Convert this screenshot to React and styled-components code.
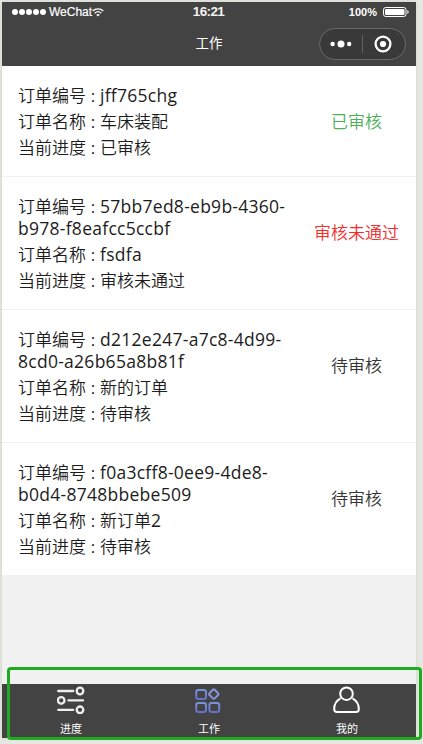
import styled, { createGlobalStyle } from "styled-components";

const orders = [
	{ id: "jff765chg", name: "车床装配", status: "已审核", color: "#4caf58" },
	{
		id: "57bb7ed8-eb9b-4360-b978-f8eafcc5ccbf",
		latinName: "fsdfa",
		status: "审核未通过",
		color: "#f52a2a",
	},
	{
		id: "d212e247-a7c8-4d99-8cd0-a26b65a8b81f",
		name: "新的订单",
		status: "待审核",
		color: "#333",
	},
	{
		id: "f0a3cff8-0ee9-4de8-b0d4-8748bbebe509",
		name: "新订单",
		latinName: "2",
		status: "待审核",
		color: "#333",
	},
];

const WifiIcon = () => (
	<svg width="12" height="9" viewBox="0 0 12 9" fill="none" stroke="#fff">
		<path d="M0.7 3.1C3.7 0.1 8.3 0.1 11.3 3.1" strokeWidth="1.4" />
		<path d="M2.7 5.2C4.6 3.4 7.4 3.4 9.3 5.2" strokeWidth="1.3" />
		<path d="M4.2 6.7Q6 5.4 7.8 6.7L6 8.6Z" fill="#fff" stroke="none" />
	</svg>
);

const BatteryIcon = () => (
	<svg width="27" height="10" viewBox="0 0 27 10">
		<rect x="0.5" y="0.5" width="22.5" height="9" rx="2.2" fill="none" stroke="#fff" />
		<rect x="2" y="2" width="19.5" height="6" rx="1" fill="#fff" />
		<path d="M24.4 3Q27 5 24.4 7Z" fill="#fff" />
	</svg>
);

const ProgressIcon = () => (
	<svg width="28" height="28" viewBox="0 0 28 28" fill="none" stroke="#eee" strokeWidth="2.3" strokeLinecap="round">
		<path d="M1.2 5H16.2M11.5 14.4H26M1.2 23.8H16.2" />
		<circle cx="23" cy="5" r="3.3" />
		<circle cx="4.2" cy="14.4" r="3.3" />
		<circle cx="23" cy="23.8" r="3.3" />
	</svg>
);

const WorkIcon = () => (
	<svg width="28" height="28" viewBox="0 0 28 28" fill="none" stroke="url(#work)" strokeWidth="2">
		<defs>
			<linearGradient id="work" x1="0" y1="0" x2="0" y2="1">
				<stop offset="0" stopColor="#7892dc" />
				<stop offset="1" stopColor="#6870c8" />
			</linearGradient>
		</defs>
		<rect x="1.2" y="4" width="9.8" height="9" rx="2.2" />
		<rect x="1.2" y="17" width="9.8" height="9" rx="2.2" />
		<rect x="14.4" y="17" width="9.8" height="9" rx="2.2" />
		<rect
			x="15.1"
			y="4.4"
			width="7.4"
			height="7.4"
			rx="1.3"
			transform="rotate(45 18.8 8.1)"
			stroke="#8796d8"
		/>
	</svg>
);

const MineIcon = () => (
	<svg width="28" height="28" viewBox="0 0 28 28" fill="none" stroke="#fff" strokeWidth="2" strokeLinecap="round">
		<circle cx="13.5" cy="7.7" r="6.3" />
		<path d="M6.8 12.9C3 15 1.2 18.6 1.2 23.2Q1.2 26 4 26H23Q25.8 26 25.8 23.2C25.8 18.6 24 15 20.2 12.9" />
	</svg>
);

const App = () => {
	return (
		<>
			<GlobalStyle />
			<Phone>
				<Header>
					<StatusBar>
						<Carrier>
							<Signal>
								<i />
								<i />
								<i />
								<i />
								<i />
							</Signal>
							<span>WeChat</span>
							<WifiIcon />
						</Carrier>
						<Time>16:21</Time>
						<Power>
							<span>100%</span>
							<BatteryIcon />
						</Power>
					</StatusBar>
					<NavBar>
						<Title>工作</Title>
						<Capsule>
							<svg width="22" height="8" viewBox="0 0 22 8" fill="#fff">
								<circle cx="2.6" cy="4" r="2.2" />
								<circle cx="11" cy="4" r="3.5" />
								<circle cx="19.2" cy="4" r="2.2" />
							</svg>
							<Divider />
							<svg width="18" height="18" viewBox="0 0 18 18">
								<circle cx="9" cy="9" r="7.4" fill="none" stroke="#fff" strokeWidth="2.3" />
								<circle cx="9" cy="9" r="3.1" fill="#fff" />
							</svg>
						</Capsule>
					</NavBar>
				</Header>
				<List>
					{orders.map((order) => (
						<Order key={order.id}>
							<Info>
								<p>
									订单编号<Colon>:</Colon>
									<Latin>{order.id}</Latin>
								</p>
								<p>
									订单名称<Colon>:</Colon>
									{order.name}
									{order.latinName && <Latin>{order.latinName}</Latin>}
								</p>
								<p>
									当前进度<Colon>:</Colon>
									{order.status}
								</p>
							</Info>
							<Status $color={order.color}>{order.status}</Status>
						</Order>
					))}
				</List>
				<TabBar>
					<Tab>
						<ProgressIcon />
						<span>进度</span>
					</Tab>
					<Tab>
						<WorkIcon />
						<span>工作</span>
					</Tab>
					<Tab>
						<MineIcon />
						<span>我的</span>
					</Tab>
				</TabBar>
			</Phone>
			<Highlight />
		</>
	);
};

export default App;

const GlobalStyle = createGlobalStyle`
	* {
		box-sizing: border-box;
		margin: 0;
		padding: 0;
	}
	body {
		background: #e7e7e2;
		padding: 2px;
		height: 744px;
		overflow: hidden;
		font-family: "Open Sans", "Noto Sans CJK SC", sans-serif;
	}
	svg {
		display: block;
		flex-shrink: 0;
	}
`;

const Phone = styled.div`
	display: flex;
	flex-direction: column;
	width: 414px;
	height: 736px;
	background: #f1f1f1;
	box-shadow: 0 0 4px rgba(0, 0, 0, 0.1);
`;

const Header = styled.div`
	height: 64px;
	background: #434343;
	color: #fff;
`;

const StatusBar = styled.div`
	display: grid;
	grid-template-columns: 1fr auto 1fr;
	align-items: center;
	height: 20px;
	padding: 0 6px;
	font-family: "Liberation Sans", Arial, sans-serif;
`;

const Carrier = styled.div`
	display: flex;
	align-items: center;
	padding-left: 4px;
	font-size: 12px;
	span {
		margin-left: 3px;
		-webkit-text-stroke: 0.2px #fff;
	}
`;

const Signal = styled.div`
	display: flex;
	gap: 1px;
	i {
		width: 6px;
		height: 6px;
		border-radius: 50%;
		background: #fff;
	}
`;

const Time = styled.div`
	padding-right: 1px;
	padding-bottom: 2px;
	font-size: 13.5px;
	font-weight: bold;
	letter-spacing: -0.6px;
	color: #f2f2f2;
`;

const Power = styled.div`
	display: flex;
	justify-content: flex-end;
	align-items: center;
	gap: 6px;
	font-size: 11px;
	font-weight: bold;
`;

const NavBar = styled.div`
	display: grid;
	grid-template-columns: 1fr auto 1fr;
	align-items: center;
	height: 44px;
	padding: 0 10px;
`;

const Title = styled.div`
	grid-column: 2;
	padding-bottom: 2px;
	font-size: 13.5px;
	line-height: 20px;
`;

const Capsule = styled.div`
	display: flex;
	align-items: center;
	justify-self: end;
	width: 87px;
	height: 32px;
	padding-left: 10px;
	border: 1px solid #6a6a6a;
	border-radius: 16px;
	background: #393939;
`;

const Divider = styled.div`
	width: 1px;
	height: 18px;
	margin: 0 11px 0 10px;
	background: #606060;
`;

const List = styled.div`
	flex: 1;
`;

const Order = styled.div`
	display: flex;
	align-items: flex-start;
	padding: 17px 0 15px 16px;
	background: #fff;
	border-bottom: 1px solid #f1f1f1;
	font-size: 17px;
	font-weight: 350;
	line-height: 22px;
	color: #1c1c1c;
`;

const Info = styled.div`
	width: 280px;
	p {
		margin: 4px 0;
	}
	p:first-child,
	p:last-child {
		margin: 2px 0;
	}
`;

const Colon = styled.span`
	display: inline-block;
	width: 14px;
	font-weight: 400;
	text-align: center;
`;

const Latin = styled.span`
	font-size: 17.5px;
	font-weight: 400;
	letter-spacing: 0.27px;
	line-height: 1;
`;

const Status = styled.div`
	flex: 1;
	margin-top: 28px;
	padding-right: 1px;
	text-align: center;
	color: ${(props) => props.$color};
`;

const TabBar = styled.div`
	display: flex;
	height: 54px;
	background: #434343;
`;

const Tab = styled.div`
	flex: 1;
	display: flex;
	flex-direction: column;
	align-items: center;
	padding-top: 2px;
	font-size: 11px;
	line-height: 16px;
	color: #fff;
	span {
		margin-top: 7px;
	}
`;

/* frame drawn over the tab bar */
const Highlight = styled.div`
	position: absolute;
	left: 7px;
	top: 667px;
	width: 415px;
	height: 73px;
	border: 3px solid #1fab1f;
	border-radius: 4px;
`;
